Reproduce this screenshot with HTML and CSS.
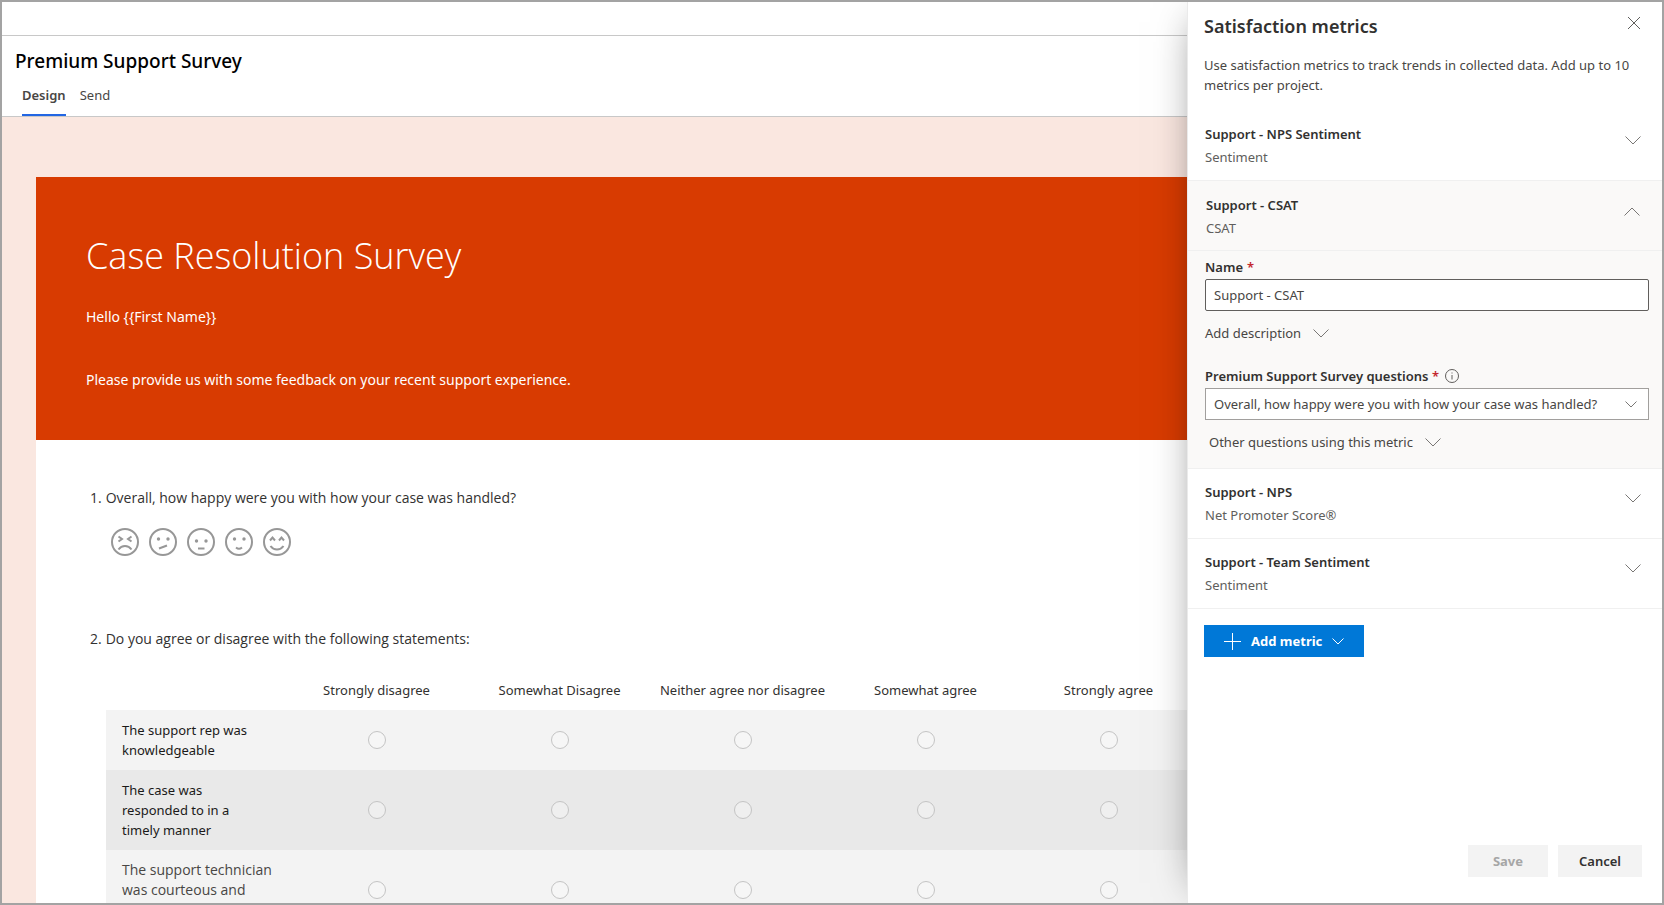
FILE: index.html
```html
<!DOCTYPE html>
<html lang="en">
<head>
<meta charset="utf-8">
<title>Premium Support Survey</title>
<link rel="stylesheet" href="styles.css">
</head>
<body>
<svg class="defs" aria-hidden="true">
  <symbol id="chevron" viewBox="0 0 16 9"><path d="M.5.5 8 8 15.500.5"/></symbol>
  <symbol id="chevron-small" viewBox="0 0 12 7"><path d="M.5.5 6 6 11.500.5"/></symbol>
</svg>
<div class="app">
  <div class="workspace">
    <div class="topbar"></div>
    <header class="header">
      <h1 class="project">Premium Support Survey</h1>
      <nav class="tabs">
        <a class="tab tab-active" href="#design">Design</a>
        <a class="tab" href="#send">Send</a>
      </nav>
    </header>
    <main class="canvas">
      <section class="banner">
        <h2 class="banner-title">Case Resolution Survey</h2>
        <p class="banner-text">Hello {{First Name}}</p>
        <p class="banner-text">Please provide us with some feedback on your recent support experience.</p>
      </section>
      <section class="questions">
        <h3 class="question"><span class="number">1.</span>Overall, how happy were you with how your case was handled?</h3>
        <div class="smileys">
          <button class="smiley" aria-label="Very unhappy"><svg viewBox="0 0 28 28"><circle cx="14" cy="14" r="13"/><path d="M7.500 8.500l3.500 2.500-3.500 2.500M20.500 8.500 17 11l3.500 2.500M7.500 21.500q2.500-3.500 6.500-3.500t6.500 3.500"/></svg></button>
          <button class="smiley" aria-label="Unhappy"><svg viewBox="0 0 28 28"><circle cx="14" cy="14" r="13"/><path d="M10 20.500l8-3"/><circle class="eye" cx="9.500" cy="11" r="1.700"/><circle class="eye" cx="19" cy="11" r="1.700"/></svg></button>
          <button class="smiley" aria-label="Neutral"><svg viewBox="0 0 28 28"><circle cx="14" cy="14" r="13"/><path d="M11 20.500h6.500"/><circle class="eye" cx="9.500" cy="13" r="1.700"/><circle class="eye" cx="19" cy="13" r="1.700"/></svg></button>
          <button class="smiley" aria-label="Happy"><svg viewBox="0 0 28 28"><circle cx="14" cy="14" r="13"/><path d="M11 19.500q3 2.500 6 0"/><circle class="eye" cx="9.500" cy="11" r="1.700"/><circle class="eye" cx="19" cy="11" r="1.700"/></svg></button>
          <button class="smiley" aria-label="Very happy"><svg viewBox="0 0 28 28"><circle cx="14" cy="14" r="13"/><path d="M7 12.500l2.500-3 2.500 3M16 12.500l2.500-3 2.500 3M7.500 18q2.500 3.500 6.500 3.500t6.500-3.500"/></svg></button>
        </div>
        <h3 class="question"><span class="number">2.</span>Do you agree or disagree with the following statements:</h3>
        <table class="likert">
          <thead>
            <tr><td class="corner"></td><th scope="col">Strongly disagree</th><th scope="col">Somewhat Disagree</th><th scope="col">Neither agree nor disagree</th><th scope="col">Somewhat agree</th><th scope="col">Strongly agree</th></tr>
          </thead>
          <tbody>
            <tr><th scope="row">The support rep was knowledgeable</th>
              <td><input type="radio" name="s1" aria-label="Strongly disagree"></td><td><input type="radio" name="s1" aria-label="Somewhat Disagree"></td><td><input type="radio" name="s1" aria-label="Neither agree nor disagree"></td><td><input type="radio" name="s1" aria-label="Somewhat agree"></td><td><input type="radio" name="s1" aria-label="Strongly agree"></td></tr>
            <tr><th scope="row">The case was responded to in a timely manner</th>
              <td><input type="radio" name="s2" aria-label="Strongly disagree"></td><td><input type="radio" name="s2" aria-label="Somewhat Disagree"></td><td><input type="radio" name="s2" aria-label="Neither agree nor disagree"></td><td><input type="radio" name="s2" aria-label="Somewhat agree"></td><td><input type="radio" name="s2" aria-label="Strongly agree"></td></tr>
            <tr class="editing"><th scope="row">The support technician was courteous and</th>
              <td><input type="radio" name="s3" aria-label="Strongly disagree"></td><td><input type="radio" name="s3" aria-label="Somewhat Disagree"></td><td><input type="radio" name="s3" aria-label="Neither agree nor disagree"></td><td><input type="radio" name="s3" aria-label="Somewhat agree"></td><td><input type="radio" name="s3" aria-label="Strongly agree"></td></tr>
          </tbody>
        </table>
      </section>
    </main>
  </div>

  <aside class="panel" aria-labelledby="panel-title">
    <div class="panel-head">
      <h2 class="panel-title" id="panel-title">Satisfaction metrics</h2>
      <button class="close" aria-label="Close"><svg viewBox="0 0 14 14"><path d="M1 1l12 12M13 1 1 13"/></svg></button>
    </div>
    <p class="intro">Use satisfaction metrics to track trends in collected data. Add up to 10 metrics per project.</p>
    <div class="metrics">
      <button class="metric" aria-expanded="false">
        <span class="metric-text"><span class="metric-name">Support - NPS Sentiment</span><span class="metric-type">Sentiment</span></span>
        <svg class="chevron"><use href="#chevron"/></svg>
      </button>
      <button class="metric metric-open" aria-expanded="true">
        <span class="metric-text"><span class="metric-name">Support - CSAT</span><span class="metric-type">CSAT</span></span>
        <svg class="chevron" viewBox="0 0 16 9"><path d="M.5 8.500 8 1l7.500 7.500"/></svg>
      </button>
      <div class="details">
        <label class="label" for="metric-name">Name <span class="required">*</span></label>
        <input class="field" id="metric-name" type="text" value="Support - CSAT" required>
        <button class="disclosure">Add description <svg class="chevron"><use href="#chevron"/></svg></button>
        <div class="label label-info">
          <label for="metric-question">Premium Support Survey questions <span class="required">*</span></label>
          <svg class="info" viewBox="0 0 14 14"><circle cx="7" cy="7" r="6.500"/><path d="M7 6v4.500M7 3.500v1"/></svg>
        </div>
        <div class="select-wrap">
          <select class="field field-select" id="metric-question"><option>Overall, how happy were you with how your case was handled?</option></select>
          <svg class="chevron-small"><use href="#chevron-small"/></svg>
        </div>
        <button class="disclosure disclosure-inset">Other questions using this metric <svg class="chevron"><use href="#chevron"/></svg></button>
      </div>
      <button class="metric" aria-expanded="false">
        <span class="metric-text"><span class="metric-name">Support - NPS</span><span class="metric-type">Net Promoter Score®</span></span>
        <svg class="chevron"><use href="#chevron"/></svg>
      </button>
      <button class="metric" aria-expanded="false">
        <span class="metric-text"><span class="metric-name">Support - Team Sentiment</span><span class="metric-type">Sentiment</span></span>
        <svg class="chevron"><use href="#chevron"/></svg>
      </button>
    </div>
    <button class="add"><svg class="plus" viewBox="0 0 17 17"><path d="M8.500 0v17M0 8.500h17"/></svg>Add metric<svg class="chevron-small"><use href="#chevron-small"/></svg></button>
    <div class="actions">
      <button class="action" disabled>Save</button>
      <button class="action">Cancel</button>
    </div>
  </aside>
</div>
</body>
</html>
```
FILE: styles.css
```css
* { box-sizing: border-box; }

body {
  margin: 0;
  font-family: "Noto Sans", "Open Sans", sans-serif;
  font-size: 13px;
  line-height: 20px;
  color: #323130;
}

h1, h2, h3, p { margin: 0; font-weight: 400; }
button, input, select { font: inherit; color: inherit; border-radius: 0; }
button { border: 0; padding: 0; background: none; }
svg { fill: none; stroke: currentColor; display: block; flex: none; }
.defs { position: absolute; width: 0; height: 0; }

.app {
  position: relative;
  height: 100vh;
  border: 2px solid #a3a3a3;
  overflow: hidden;
}

.workspace { display: flex; flex-direction: column; height: 100%; }
.topbar { flex: none; height: 34px; border-bottom: 1px solid #c8c8c8; }
.header { flex: none; padding: 9px 13px 0; border-bottom: 1px solid #c8c8c8; }
.project { font-size: 19px; line-height: 32px; font-weight: 500; color: #000; }
.tabs { display: flex; gap: 14px; padding-left: 7px; }
.tab { padding: 8px 0 9px; border-bottom: 2px solid transparent; color: #484644; text-decoration: none; }
.tab-active { font-weight: 600; border-bottom-color: #2266e3; }

.canvas { flex: 1; min-height: 0; overflow: hidden; padding: 60px 0 0 34px; background: #fae7e0; }
.banner { padding: 52px 50px 49px; background: #d83b01; color: #fff; }
.banner-title { font-family: "Open Sans", "Noto Sans", sans-serif; font-size: 36px; line-height: 54px; font-weight: 300; }
.banner-text { padding-top: 22px; line-height: 23px; font-size: 14px; }
.banner-text + .banner-text { padding-top: 40px; }

.questions { padding: 46px 462px 0 70px; background: #fff; }
.question { display: flex; gap: 4px; margin-left: -16px; font-family: "Open Sans", "Noto Sans", sans-serif; font-size: 14px; line-height: 24px; }
.smileys { display: flex; gap: 10px; padding: 18px 0 71px 5px; }
.smiley { width: 28px; height: 28px; color: #979797; }
.smiley svg { width: 28px; height: 28px; stroke-width: 2; }
.smiley .eye { fill: currentColor; stroke: none; }

.likert { width: 100%; margin-top: 22px; border-collapse: collapse; table-layout: fixed; }
.likert th { font-weight: 400; padding: 0; }
.likert td { padding: 0; text-align: center; }
.likert .corner { width: 179px; }
.likert thead th { height: 37px; padding-bottom: 3px; vertical-align: middle; white-space: nowrap; }
.likert tbody th { padding: 10px 32px 10px 16px; text-align: left; vertical-align: top; color: #1b1a19; }
.likert tbody tr { background: #f3f3f3; }
.likert tbody tr:nth-child(2) { background: #e9e9e9; }
.likert tbody .editing th { height: 80px; padding-right: 8px; font-family: "Open Sans", "Noto Sans", sans-serif; font-size: 14px; color: #484644; }
.likert input {
  appearance: none;
  display: block;
  width: 18px;
  height: 18px;
  margin: 0 auto;
  border: 1px solid #c4c4c4;
  border-radius: 50%;
  background: rgba(255, 255, 255, .3);
}

.panel {
  position: absolute;
  inset: 0 0 0 auto;
  display: flex;
  flex-direction: column;
  width: 475px;
  background: #fff;
  border-left: 1px solid #eaeaea;
  box-shadow: -8px 0 40px -20px rgba(0, 0, 0, .55);
}
.panel-head { display: flex; justify-content: space-between; align-items: flex-start; padding: 10px 21px 0 16px; }
.panel-title { font-size: 18px; line-height: 28px; font-weight: 600; }
.close { padding-top: 4px; color: #605e5c; }
.close svg { width: 14px; height: 14px; }
.intro { padding: 15px 16px 0; color: #484644; }

.metrics { padding-top: 16px; }
.metric {
  display: flex;
  justify-content: space-between;
  align-items: center;
  width: 100%;
  height: 70px;
  padding: 0 21px 0 17px;
  border-bottom: 1px solid #f0f0f0;
  text-align: left;
}
.metric-text { display: flex; flex-direction: column; gap: 3px; }
.metric-name { font-weight: 600; }
.metric-type { color: #605e5c; }
.metric-open { padding: 1px 22px 0 18px; }
.metric-open, .details { background: #faf9f8; }
.chevron { width: 16px; height: 9px; color: #797775; }
.metric .chevron { margin-bottom: 10px; }
.chevron-small { width: 12px; height: 7px; }

.details { padding: 5px 13px 16px 17px; border-bottom: 1px solid #f0f0f0; }
.label { display: flex; gap: 4px; margin-bottom: 1px; line-height: 22px; font-weight: 600; }
.label-info { align-items: center; gap: 6px; padding-top: 22px; }
.required { color: #c4262e; }
.info { width: 14px; height: 14px; color: #605e5c; }
.field { display: block; width: 100%; height: 32px; padding: 0 8px; border: 1px solid #605e5c; border-radius: 2px; background: #fff; color: #484644; }
.field-select { appearance: none; border-color: #a19f9d; border-radius: 0; }
.select-wrap { position: relative; }
.select-wrap .chevron-small { position: absolute; right: 12px; top: 13px; color: #797775; pointer-events: none; }
.disclosure { display: flex; align-items: center; gap: 12px; padding-top: 12px; color: #484644; }
.disclosure-inset { padding-left: 4px; }

.add {
  display: flex;
  align-items: center;
  align-self: flex-start;
  gap: 10px;
  height: 32px;
  margin: 16px 0 0 16px;
  padding: 0 20px;
  background: #0078d7;
  color: #fff;
  font-weight: 700;
}
.plus { width: 17px; height: 17px; }
.actions { display: flex; justify-content: flex-end; gap: 10px; margin-top: auto; padding: 0 20px 26px; }
.action { min-width: 80px; height: 32px; padding: 0 21px; background: #f3f3f3; font-weight: 600; }
.action:disabled { font-weight: 700; color: #a6a6a6; }
```
